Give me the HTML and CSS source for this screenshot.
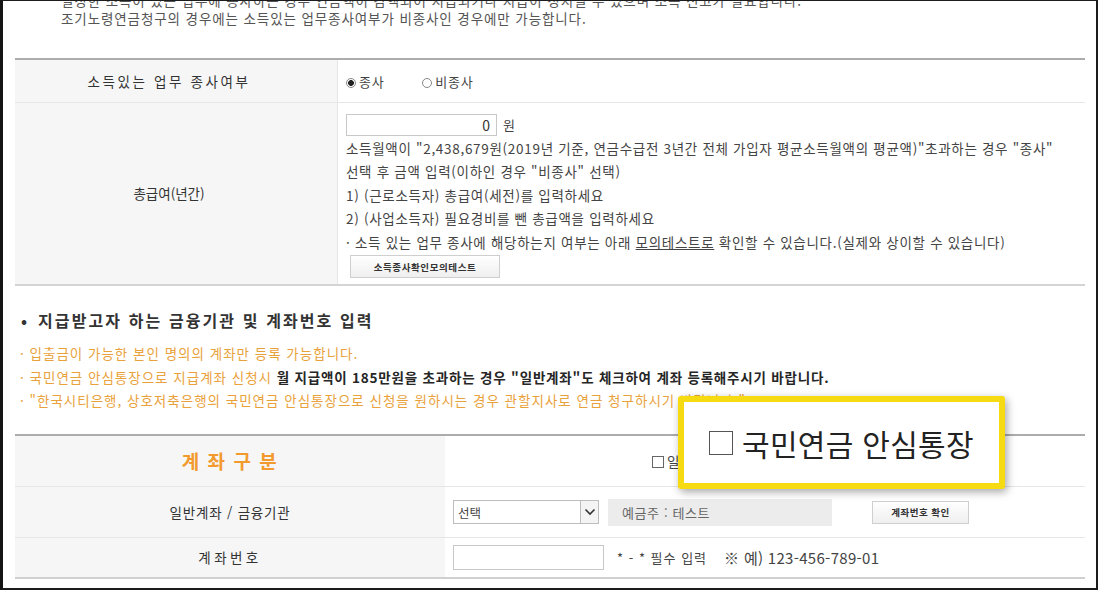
FILE: index.html
```html
<!DOCTYPE html>
<html lang="ko">
<head>
<meta charset="utf-8">
<link rel="stylesheet" href="styles.css">
</head>
<body>
<div class="frame">
  <div class="page">
    <div class="notes">
      <p>일정한 소득이 있는 업무에 종사하는 경우 연금액이 감액되어 지급되거나 지급이 정지될 수 있으며 소득 신고가 필요합니다.</p>
      <p>조기노령연금청구의 경우에는 소득있는 업무종사여부가 비종사인 경우에만 가능합니다.</p>
    </div>

    <table class="t1">
      <tr class="r1">
        <th class="lab1 wide">소득있는 업무 종사여부</th>
        <td class="val1">
          <span class="radio on"></span><span class="rtxt">종사</span>
          <span class="radio off"></span><span class="rtxt">비종사</span>
        </td>
      </tr>
      <tr class="r2">
        <th class="lab1">총급여(년간)</th>
        <td class="val1">
          <div class="amt"><span class="inbox">0</span><span class="won">원</span></div>
          <p class="ln">소득월액이 "2,438,679원(2019년 기준, 연금수급전 3년간 전체 가입자 평균소득월액의 평균액)"초과하는 경우 "종사"</p>
          <p class="ln">선택 후 금액 입력(이하인 경우 "비종사" 선택)</p>
          <p class="ln">1) (근로소득자) 총급여(세전)를 입력하세요</p>
          <p class="ln">2) (사업소득자) 필요경비를 뺀 총급액을 입력하세요</p>
          <p class="ln">· 소득 있는 업무 종사에 해당하는지 여부는 아래 <u>모의테스트로</u> 확인할 수 있습니다.(실제와 상이할 수 있습니다)</p>
          <span class="btn b1">소득종사확인모의테스트</span>
        </td>
      </tr>
    </table>

    <h3 class="sec"><span class="dot">•</span>지급받고자 하는 금융기관 및 계좌번호 입력</h3>
    <ul class="warn">
      <li>· 입출금이 가능한 본인 명의의 계좌만 등록 가능합니다.</li>
      <li>· 국민연금 안심통장으로 지급계좌 신청시 <b>월 지급액이 185만원을 초과하는 경우 "일반계좌"도 체크하여 계좌 등록해주시기 바랍니다.</b></li>
      <li>· "한국시티은행, 상호저축은행의 국민연금 안심통장으로 신청을 원하시는 경우 관할지사로 연금 청구하시기 바랍니다."</li>
    </ul>

    <table class="t2">
      <tr class="s1">
        <th class="lab2 kind">계 좌 구 분</th>
        <td class="val2 chk"><span class="box"></span>일반계좌 &nbsp;&nbsp;<span class="box"></span>국민연금 안심통장</td>
      </tr>
      <tr class="s2">
        <th class="lab2">일반계좌 / 금융기관</th>
        <td class="val2">
          <div class="bankrow">
            <span class="sel"><span class="seltxt">선택</span><span class="arrow"><svg width="12" height="8" viewBox="0 0 12 8"><path d="M1.5 1.5 L6 6 L10.5 1.5" fill="none" stroke="#333" stroke-width="1.6"/></svg></span></span>
            <span class="owner">예금주 : 테스트</span>
            <span class="btn b2">계좌번호 확인</span>
          </div>
        </td>
      </tr>
      <tr class="s3">
        <th class="lab2 spaced">계좌번호</th>
        <td class="val2">
          <div class="accrow">
            <span class="inbox2"></span>
            <span class="req">* - * 필수 입력</span>
            <span class="ex">※ 예) 123-456-789-01</span>
          </div>
        </td>
      </tr>
    </table>

    <div class="callout"><span class="cbox"></span>국민연금 안심통장</div>
  </div>
</div>
</body>
</html>
```

FILE: styles.css
```css
html, body {
  margin: 0;
  padding: 0;
  background: #fff;
}
body {
  font-family: "Noto Sans CJK KR", "Noto Sans", sans-serif;
  color: #444;
}
.frame {
  width: 1098px;
  height: 590px;
  box-sizing: border-box;
  border-left: 3px solid #141414;
  border-top: 1px solid #1c1c1c;
  border-right: 2px solid #1c1c1c;
  border-bottom: 2px solid #1c1c1c;
  overflow: hidden;
  background: #fff;
}
.page {
  position: relative;
  padding: 0 11px 0 12px;
}
.notes {
  margin-top: -10px;
  padding-left: 46px;
}
.notes p {
  margin: 0;
  font-size: 13.5px;
  line-height: 18px;
  color: #555;
  white-space: nowrap;
  letter-spacing: 0.9px;
}

table {
  border-collapse: collapse;
  width: 100%;
}
th, td {
  padding: 0;
  font-weight: normal;
}
.t1 {
  margin-top: 31px;
  border-top: 2px solid #acacac;
  border-bottom: 2px solid #d4d4d4;
}
.t1 tr.r1 {
  height: 43px;
  border-bottom: 1px solid #e6e6e6;
}
.t1 tr.r2 {
  height: 183px;
}
.lab1 {
  width: 308px;
  background: #f6f6f6;
  border-right: 1px solid #e6e6e6;
  font-size: 13.5px;
  color: #333;
  text-align: center;
  padding-right: 14px;
}
.lab1.wide {
  letter-spacing: 2.6px;
}
.val1 {
  padding-left: 8px;
  vertical-align: middle;
  font-size: 13.5px;
  color: #444;
}
.r2 .val1 {
  vertical-align: top;
  padding-top: 11px;
}
.radio {
  display: inline-block;
  width: 8px;
  height: 8px;
  border: 1px solid #888;
  border-radius: 50%;
  vertical-align: -1px;
  box-sizing: content-box;
}
.radio.on {
  background: radial-gradient(circle, #222 0 2.6px, #fff 3.2px);
}
.radio.off {
  margin-left: 34px;
}
.rtxt {
  margin-left: 3px;
  font-size: 13px;
  color: #444;
  letter-spacing: 0.8px;
}
.amt {
  display: flex;
  align-items: center;
  height: 22px;
}
.inbox {
  display: inline-block;
  box-sizing: border-box;
  width: 151px;
  height: 22px;
  border: 1px solid #c8c8c8;
  text-align: right;
  padding-right: 6px;
  font-size: 14px;
  line-height: 20px;
  color: #333;
}
.won {
  margin-left: 6px;
  font-size: 13px;
  color: #444;
}
.ln {
  margin: 0;
  line-height: 23.5px;
  white-space: nowrap;
  letter-spacing: 0.7px;
}
.amt + .ln {
  margin-top: 1px;
}
.btn {
  display: inline-flex;
  align-items: center;
  justify-content: center;
  box-sizing: border-box;
  border: 1px solid #cfcfcf;
  background: linear-gradient(#ffffff, #efefef);
  font-size: 9.5px;
  font-weight: bold;
  color: #333;
}
.b1 {
  margin-left: 4px;
  margin-top: 1px;
  width: 150px;
  height: 23px;
  letter-spacing: 0.6px;
}

.sec {
  margin: 23px 0 0 0;
  font-size: 16px;
  line-height: 22px;
  font-weight: bold;
  color: #333;
  letter-spacing: 2.1px;
}
.sec .dot {
  display: inline-block;
  width: 23px;
  padding-left: 6px;
  box-sizing: border-box;
  letter-spacing: 0;
}
.warn {
  list-style: none;
  margin: 11px 0 0 0;
  padding: 0 0 0 5px;
}
.warn li {
  font-size: 13.5px;
  line-height: 23.5px;
  color: #e9a23b;
  white-space: nowrap;
  letter-spacing: 1px;
}
.warn b {
  color: #262626;
  letter-spacing: 0.8px;
}

.t2 {
  margin-top: 21px;
  border-top: 2px solid #acacac;
  border-bottom: 2px solid #d0d0d0;
}
.t2 tr {
  border-bottom: 1px solid #e6e6e6;
}
.t2 tr.s1 { height: 52px; }
.t2 tr.s2 { height: 51px; }
.t2 tr.s3 { height: 40px; border-bottom: none; }
.lab2 {
  width: 430px;
  background: #f6f6f6;
  font-size: 13.5px;
  letter-spacing: 0.8px;
  color: #333;
  text-align: center;
}
.lab2.spaced {
  letter-spacing: 3.4px;
}
.kind {
  font-size: 19px;
  font-weight: bold;
  color: #f29a2e;
  letter-spacing: 1.5px;
}
.val2 {
  padding-left: 8px;
  font-size: 13.5px;
  color: #444;
}
.chk {
  padding-left: 207px;
  font-size: 13.5px;
}
.box {
  display: inline-block;
  width: 10px;
  height: 10px;
  border: 1px solid #666;
  margin-right: 3px;
  vertical-align: -1px;
}
.bankrow, .accrow {
  display: flex;
  align-items: center;
}
.sel {
  display: flex;
  box-sizing: border-box;
  width: 146px;
  height: 24px;
  border: 1px solid #bdbdbd;
  align-items: center;
  justify-content: space-between;
}
.seltxt {
  padding-left: 4px;
  font-size: 12.5px;
  color: #444;
}
.arrow {
  display: flex;
  align-items: center;
  justify-content: center;
  width: 17px;
  height: 22px;
  border-left: 1px solid #bdbdbd;
  background: #f4f4f4;
}
.owner {
  display: flex;
  align-items: center;
  box-sizing: border-box;
  margin-left: 9px;
  width: 224px;
  height: 27px;
  padding-left: 14px;
  background: #ececec;
  font-size: 13px;
  color: #666;
  letter-spacing: 0.6px;
}
.b2 {
  margin-left: 40px;
  width: 97px;
  height: 23px;
  font-size: 9.5px;
  letter-spacing: 0.5px;
}
.inbox2 {
  display: inline-block;
  box-sizing: border-box;
  width: 151px;
  height: 25px;
  border: 1px solid #c8c8c8;
}
.req {
  margin-left: 13px;
  font-size: 13px;
  color: #444;
  letter-spacing: 1px;
}
.ex {
  margin-left: 17px;
  font-size: 15px;
  color: #444;
  letter-spacing: 0.3px;
}

.callout {
  position: absolute;
  left: 675px;
  top: 405px;
  width: 327px;
  height: 93px;
  box-sizing: border-box;
  border: 6px solid #f6da12;
  border-radius: 3px;
  background: #fff;
  box-shadow: 2px 3px 8px rgba(0,0,0,0.35);
  display: flex;
  align-items: center;
  padding-left: 25px;
  font-size: 30px;
  color: #222;
  letter-spacing: 0.3px;
}
.cbox {
  display: inline-block;
  width: 22px;
  height: 22px;
  border: 1.5px solid #555;
  margin-right: 9px;
}
```
